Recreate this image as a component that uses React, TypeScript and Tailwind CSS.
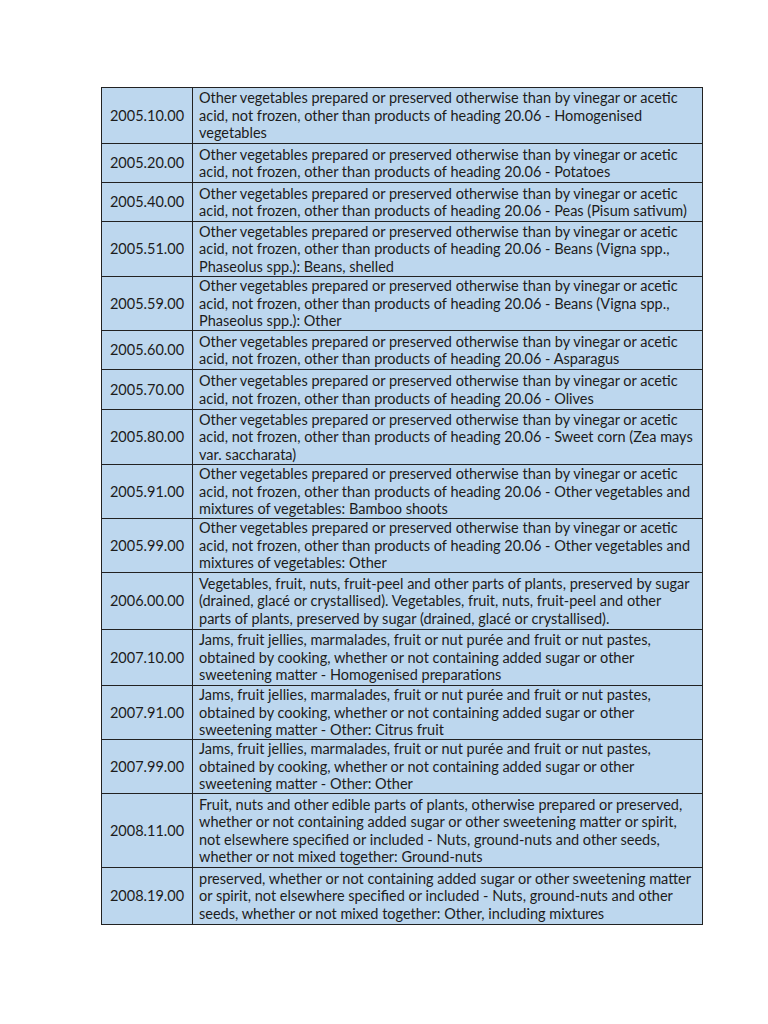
const prepared = "Other vegetables prepared or preserved otherwise than by vinegar or acetic";
const heading = "acid, not frozen, other than products of heading 20.06 - ";
const jams1 = "Jams, fruit jellies, marmalades, fruit or nut purée and fruit or nut pastes,";
const jams2 = "obtained by cooking, whether or not containing added sugar or other";

interface Row {
  code: string;
  lines: string[];
  h: string;
}

const rows: Row[] = [
  { code: "2005.10.00", h: "h-[55px]", lines: [prepared, heading + "Homogenised", "vegetables"] },
  { code: "2005.20.00", h: "h-[39px]", lines: [prepared, heading + "Potatoes"] },
  { code: "2005.40.00", h: "h-[39px]", lines: [prepared, heading + "Peas (Pisum sativum)"] },
  { code: "2005.51.00", h: "h-[55px]", lines: [prepared, heading + "Beans (Vigna spp.,", "Phaseolus spp.): Beans, shelled"] },
  { code: "2005.59.00", h: "h-[54px]", lines: [prepared, heading + "Beans (Vigna spp.,", "Phaseolus spp.): Other"] },
  { code: "2005.60.00", h: "h-[39px]", lines: [prepared, heading + "Asparagus"] },
  { code: "2005.70.00", h: "h-[40px]", lines: [prepared, heading + "Olives"] },
  { code: "2005.80.00", h: "h-[55px]", lines: [prepared, heading + "Sweet corn (Zea mays", "var. saccharata)"] },
  { code: "2005.91.00", h: "h-[54px]", lines: [prepared, heading + "Other vegetables and", "mixtures of vegetables: Bamboo shoots"] },
  { code: "2005.99.00", h: "h-[54px]", lines: [prepared, heading + "Other vegetables and", "mixtures of vegetables: Other"] },
  {
    code: "2006.00.00",
    h: "h-[57px]",
    lines: [
      "Vegetables, fruit, nuts, fruit-peel and other parts of plants, preserved by sugar",
      "(drained, glacé or crystallised). Vegetables, fruit, nuts, fruit-peel and other",
      "parts of plants, preserved by sugar (drained, glacé or crystallised).",
    ],
  },
  { code: "2007.10.00", h: "h-[56px]", lines: [jams1, jams2, "sweetening matter - Homogenised preparations"] },
  { code: "2007.91.00", h: "h-[54px]", lines: [jams1, jams2, "sweetening matter - Other: Citrus fruit"] },
  { code: "2007.99.00", h: "h-[54px]", lines: [jams1, jams2, "sweetening matter - Other: Other"] },
  {
    code: "2008.11.00",
    h: "h-[74px]",
    lines: [
      "Fruit, nuts and other edible parts of plants, otherwise prepared or preserved,",
      "whether or not containing added sugar or other sweetening matter or spirit,",
      "not elsewhere specified or included - Nuts, ground-nuts and other seeds,",
      "whether or not mixed together: Ground-nuts",
    ],
  },
  {
    code: "2008.19.00",
    h: "h-[57px]",
    lines: [
      "preserved, whether or not containing added sugar or other sweetening matter",
      "or spirit, not elsewhere specified or included - Nuts, ground-nuts and other",
      "seeds, whether or not mixed together: Other, including mixtures",
    ],
  },
];

export default function App() {
  return (
    <div className="min-h-[1024px] w-[768px] bg-white pt-[87px] pl-[101px] text-[#1c1c1c] font-['Lato',sans-serif] text-[14.5px] leading-[17.5px]">
      <div className="w-[602px] border border-[#222] bg-[#bdd7ee]">
        {rows.map((row, i) => (
          <div
            key={row.code}
            className={`flex ${row.h} ${i > 0 ? "border-t border-[#222]" : ""}`}
          >
            <div className="flex w-[91px] shrink-0 items-center justify-center border-r border-[#222]">
              {row.code}
            </div>
            <div className="flex flex-1 flex-col justify-center pl-[6px] whitespace-nowrap">
              {row.lines.map((line, j) => (
                <span key={j}>{line}</span>
              ))}
            </div>
          </div>
        ))}
      </div>
    </div>
  );
}
